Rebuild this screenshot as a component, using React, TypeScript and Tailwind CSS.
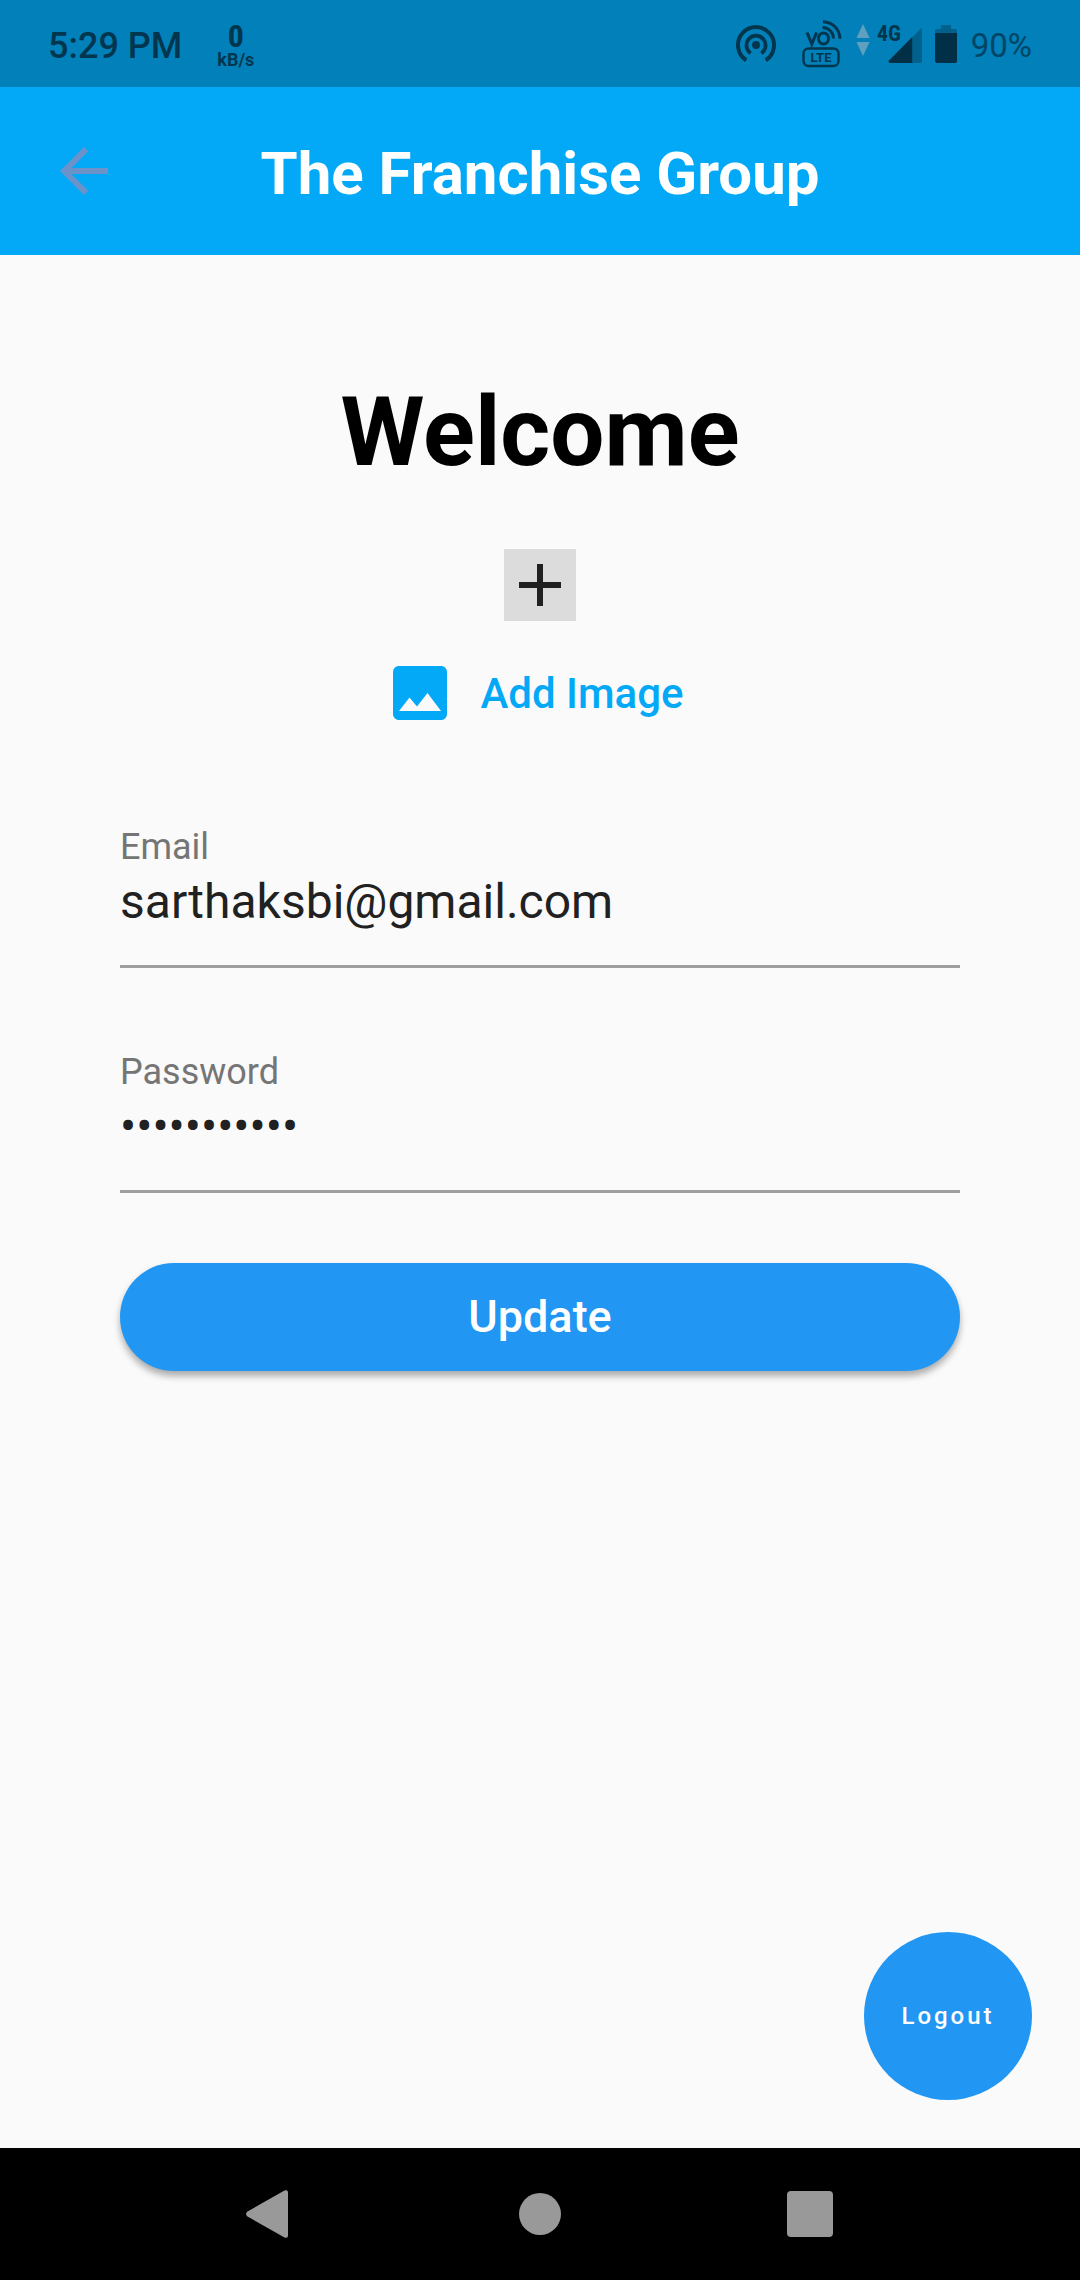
function HotspotIcon() {
  return (
    <svg viewBox="0 0 40 37" className="h-[37px] w-10" fill="none" stroke="#01364e" strokeWidth="4" strokeLinecap="butt" aria-hidden="true">
      <circle cx="20" cy="20" r="4" fill="#01364e" stroke="none" />
      <path d="M14.6 28.2A9.6 9.6 0 1 1 25.4 28.2" strokeWidth="3.8" />
      <path d="M10.2 35.2A18 18 0 1 1 29.8 35.2" />
    </svg>
  );
}

function VolteIcon() {
  return (
    <svg viewBox="0 0 40 48" className="h-12 w-10" fill="none" stroke="#01364e" aria-hidden="true">
      <path d="M5 12.500l4.800 11.500L14.600 12.500" strokeWidth="3" />
      <ellipse cx="21.500" cy="18.500" rx="5" ry="5.500" strokeWidth="3" />
      <path d="M20.500 7.500c6.500 .4 10.500 4.600 11 11" strokeWidth="3" />
      <path d="M21 1.800c10 .5 16.500 7 17 17" strokeWidth="3" />
      <rect x="1.500" y="28.500" width="35" height="17.500" rx="5" strokeWidth="2.400" />
      <text x="19" y="42" textAnchor="middle" fontSize="13" fontWeight="700" fontFamily="Roboto, sans-serif" fill="#01364e" stroke="none">
        LTE
      </text>
    </svg>
  );
}

function DataArrowsIcon() {
  return (
    <svg viewBox="0 0 14 32" className="h-8 w-3.5" fill="#5f9fbf" aria-hidden="true">
      <path d="M7 0l6.500 14H.5zM7 32l6.500-14H.5z" />
    </svg>
  );
}

function SignalIcon() {
  return (
    <svg viewBox="0 -6 46 52" className="h-[52px] w-[46px]" aria-hidden="true">
      <path d="M44 4.500L12 36.500q-1 2.500 1.500 2.500H43q2 0 2-2V6q0-2.500-1-1.500z" fill="#01608c" />
      <path d="M35.200 13L12 36.500q-1 2.500 1.500 2.500h21.700z" fill="#012f45" />
      <text x="0" y="17" fontSize="22" fontWeight="700" fontFamily="'Roboto Condensed', Roboto, sans-serif" fill="#01364e">
        4G
      </text>
    </svg>
  );
}

function BatteryIcon() {
  return (
    <svg viewBox="0 0 22 38" className="h-[38px] w-[22px]" aria-hidden="true">
      <path d="M6 0h10v4h4q2 0 2 2v4H0V6q0-2 2-2h4z" fill="#01608c" />
      <path d="M0 8h22v28q0 2-2 2H2q-2 0-2-2z" fill="#012f45" />
    </svg>
  );
}

function StatusBar() {
  return (
    <div className="flex h-[87px] items-center justify-between bg-[#0280b9] px-12 text-[#01364e]">
      <div className="flex items-center pt-1">
        <span className="text-4xl font-medium leading-[42px]">5:29 PM</span>
        <span className="ml-[35px] flex flex-col items-center font-bold">
          <span className="font-['Roboto_Condensed',Roboto,sans-serif] text-[32px] leading-7">0</span>
          <span className="text-lg leading-5">kB/s</span>
        </span>
      </div>
      <div className="flex items-center">
        <HotspotIcon />
        <span className="ml-[26px]">
          <VolteIcon />
        </span>
        <span className="mb-2 ml-3.5">
          <DataArrowsIcon />
        </span>
        <span className="ml-[7px]">
          <SignalIcon />
        </span>
        <span className="ml-3">
          <BatteryIcon />
        </span>
        <span className="ml-3.5 pt-1 text-[33px] leading-10 text-[#014566]">90%</span>
      </div>
    </div>
  );
}

type FieldProps = { id: string; label: string; type: string; value: string };

function Field({ id, label, type, value }: FieldProps) {
  return (
    <div className="flex flex-col gap-[5px]">
      <label htmlFor={id} className="text-4xl leading-[42px] text-[#757575]">
        {label}
      </label>
      <input
        id={id}
        type={type}
        defaultValue={value}
        className="h-[95px] w-full border-b-[3px] border-[#9e9e9e] bg-transparent pb-9 text-5xl leading-[56px] text-[#212121] outline-none"
      />
    </div>
  );
}

function NavigationBar() {
  return (
    <nav className="flex h-[132px] justify-center bg-black">
      <button type="button" aria-label="Back" className="flex w-1/4 items-center justify-center">
        <svg viewBox="0 0 48 48" className="size-12" fill="#999" aria-hidden="true">
          <path d="M1.500 21.500L38.500 .6Q42 -.8 42 2.500v43q0 3.300-3.500 1.900L1.500 26.500q-3-2.500 0-5z" />
        </svg>
      </button>
      <button type="button" aria-label="Home" className="flex w-1/4 items-center justify-center">
        <span className="size-[42px] rounded-full bg-[#999]" />
      </button>
      <button type="button" aria-label="Recent apps" className="flex w-1/4 items-center justify-center">
        <span className="size-[46px] rounded bg-[#999]" />
      </button>
    </nav>
  );
}

export default function App() {
  return (
    <div className="flex min-h-screen flex-col bg-[#fafafa] font-['Roboto',sans-serif]">
      <StatusBar />
      <header className="grid h-[168px] grid-cols-[72px_1fr_72px] items-center bg-[#03a9f6] px-12">
        <button type="button" aria-label="Go back">
          <svg viewBox="0 0 24 24" className="size-[72px]" fill="#6b93ca" aria-hidden="true">
            <path d="M20 11H7.830l5.590-5.590L12 4l-8 8 8 8 1.410-1.410L7.830 13H20v-2z" />
          </svg>
        </button>
        <h1 className="pt-1.5 text-center text-6xl font-bold leading-[70px] text-white">The Franchise Group</h1>
      </header>
      <main className="flex flex-1 flex-col">
        <form className="flex flex-col px-[120px] pt-[121px]" onSubmit={(e) => e.preventDefault()}>
          <h2 className="text-center text-8xl font-bold leading-[112px] text-black">Welcome</h2>
          <div className="mt-[61px] flex size-[72px] items-center justify-center self-center bg-[#dcdcdc]">
            <svg viewBox="0 0 24 24" className="size-[72px]" fill="#212121" aria-hidden="true">
              <path d="M19 13h-6v6h-2v-6H5v-2h6V5h2v6h6v2z" />
            </svg>
          </div>
          <button type="button" className="mt-[18px] flex h-[108px] items-center gap-6 self-center pl-9 pr-12 text-[#03a9f6]">
            <svg viewBox="0 0 24 24" className="size-[72px]" fill="currentColor" aria-hidden="true">
              <path d="M21 5v14c0 1.100-.9 2-2 2H5c-1.100 0-2-.9-2-2V5c0-1.100.9-2 2-2h14c1.100 0 2 .9 2 2z" />
              <path d="M8.500 13.500l2.500 3 3.500-4.500 4.500 6H5l3.500-4.500z" fill="#fafafa" />
            </svg>
            <span className="pt-0.5 text-[42px] font-medium leading-[50px]">Add Image</span>
          </button>
          <div className="mt-[79px] flex flex-col gap-[83px]">
            <Field id="email" label="Email" type="text" value="sarthaksbi@gmail.com" />
            <Field id="password" label="Password" type="password" value="sarthak1234" />
          </div>
          <button
            type="submit"
            className="mt-[70px] h-[108px] rounded-full bg-[#2196f3] text-[45px] font-medium leading-[52px] text-white shadow-[0_5px_7px_rgba(0,0,0,0.32)]"
          >
            Update
          </button>
        </form>
        <button
          type="button"
          className="mb-12 mr-12 mt-auto size-[168px] self-end rounded-full bg-[#2196f3] text-2xl font-medium tracking-[3px] text-white"
        >
          Logout
        </button>
      </main>
      <NavigationBar />
    </div>
  );
}
